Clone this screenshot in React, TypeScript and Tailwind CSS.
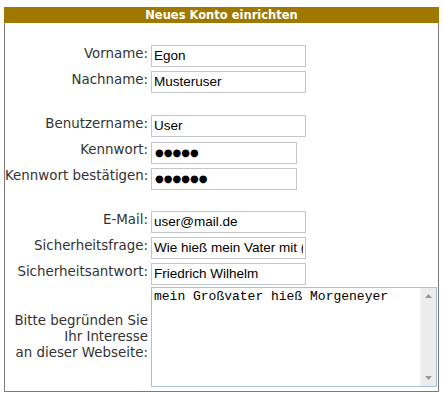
import React from 'react';

const labelCls = "text-right pr-[3px] text-[13.4px] leading-[22px] text-[#333] whitespace-nowrap";
const inputCls = "h-[22px] border border-[#c3c7cd] bg-white px-[2px] text-black outline-none";

const Row = ({ label, value, w = 155, dots = false, focus = false }: { label: string; value: string; w?: number; dots?: boolean; focus?: boolean }) => (
  <>
    <div className={labelCls}>{label}</div>
    <div className="h-[22px]">
      <input
        readOnly
        type="text"
        value={value}
        style={{ width: w }}
        className={`${inputCls} ${focus ? 'border-[#7da2ce]' : ''} ${dots ? "text-[10px] font-['DejaVu_Sans',sans-serif] pl-[3px]" : "text-[13.5px] font-['Liberation_Sans',Arial,sans-serif]"}`}
      />
    </div>
  </>
);

const Spacer = () => <div className="col-span-2 h-[14px]" />;

const App = () => {
  return (
    <div className="w-[445px] h-[397px] bg-white pt-[7px] pl-[4px] font-['DejaVu_Sans',Verdana,sans-serif]">
      <div className="w-[435px] h-[385px] border border-t-0 border-[#7a7a7a]">
        <div className="-mx-px h-[16px] bg-[#a07800] text-center text-white text-[11.5px] font-bold leading-[16px]">
          Neues Konto einrichten
        </div>
        <div className="grid grid-cols-[146px_1fr] gap-y-[4px] pt-[20px]">
          <Row label="Vorname:" value="Egon" focus />
          <Row label="Nachname:" value="Musteruser" />
          <Spacer />
          <Row label="Benutzername:" value="User" />
          <Row label="Kennwort:" value="●●●●●" w={146} dots />
          <Row label="Kennwort bestätigen:" value="●●●●●●" w={146} dots />
          <Spacer />
          <Row label="E-Mail:" value="user@mail.de" />
          <Row label="Sicherheitsfrage:" value="Wie hieß mein Vater mit (Vorname)?" />
          <Row label="Sicherheitsantwort:" value="Friedrich Wilhelm" />
          <div className="flex items-center justify-end pr-[3px] text-right text-[13.4px] leading-[16px] text-[#333]">
            <div>
              Bitte begründen Sie<br />Ihr Interesse<br />an dieser Webseite:
            </div>
          </div>
          <div className="flex h-[100px] w-[286px] border border-[#a8c0d8] bg-white">
            <textarea
              readOnly
              value="mein Großvater hieß Morgeneyer"
              className="flex-1 resize-none overflow-hidden px-[2px] pt-[1px] text-[13px] leading-[15px] text-black outline-none font-['Liberation_Mono','Courier_New',monospace]"
            />
            <div className="flex w-[16px] flex-col justify-between bg-[#ececec] border-l border-[#f4f4f4]">
              <div className="flex h-[16px] items-center justify-center">
                <svg width="7" height="4" viewBox="0 0 7 4"><path d="M0 4 L3.5 0 L7 4 Z" fill="#9a9a9a" /></svg>
              </div>
              <div className="flex h-[16px] items-center justify-center">
                <svg width="7" height="4" viewBox="0 0 7 4"><path d="M0 0 L3.5 4 L7 0 Z" fill="#9a9a9a" /></svg>
              </div>
            </div>
          </div>
        </div>
      </div>
    </div>
  );
};

export default App;
